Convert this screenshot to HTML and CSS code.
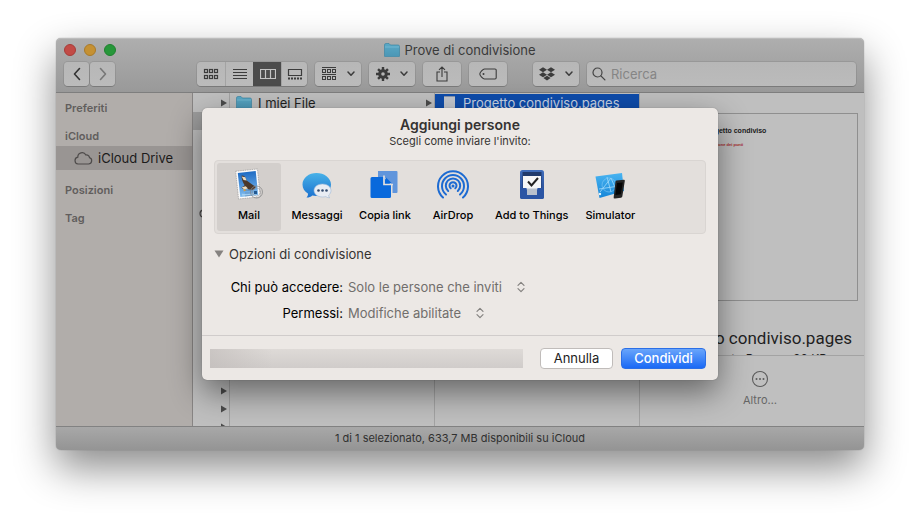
FILE: index.html
```html
<!DOCTYPE html>
<html lang="it">
<head>
<meta charset="utf-8">
<meta name="viewport" content="width=device-width, initial-scale=1">
<title>Prove di condivisione</title>
<link rel="stylesheet" href="styles.css">
</head>
<body>
<svg class="defs" aria-hidden="true">
  <defs>
    <linearGradient id="folder-fill" x1="0" y1="0" x2="0" y2="1"><stop offset="0" stop-color="#5aa9c6"/><stop offset="1" stop-color="#4b96b5"/></linearGradient>
    <symbol id="folder" viewBox="0 0 16 14">
      <path d="M.5 2A1.500 1.500 0 0 1 2 .5h3L6.500 2H14a1.500 1.500 0 0 1 1.500 1.500V13a.8.8 0 0 1-.8.8H1.300a.8.8 0 0 1-.8-.8z" fill="url(#folder-fill)" stroke="#3d86a5" stroke-width=".7"/>
      <path d="M1 4h14" stroke="#78bdd5" stroke-width=".8"/>
    </symbol>
    <symbol id="caret" viewBox="0 0 8 6"><path d="M1 1l3 3.200L7 1" fill="none" stroke="#3c3c3c" stroke-width="1.500" stroke-linecap="round" stroke-linejoin="round"/></symbol>
    <symbol id="arrow" viewBox="0 0 6 8"><path d="M0 .5v7L6 4z" fill="#4b4b4b"/></symbol>
    <symbol id="updown" viewBox="0 0 8 12"><path d="M1 4.300L4 1.300l3 3M1 7.700l3 3 3-3" fill="none" stroke="#858280" stroke-width="1.200" stroke-linecap="round" stroke-linejoin="round"/></symbol>
    <symbol id="cloud" viewBox="0 0 20 14"><path d="M5 13h10.500a3.300 3.300 0 0 0 1-6.400A3 3 0 0 0 12.900 4 4.300 4.300 0 0 0 4.800 6.200 3.450 3.450 0 0 0 5 13z" fill="none" stroke="#4e4b4a" stroke-width="1.200"/></symbol>
  </defs>
</svg>

<main class="window">
  <header class="chrome">
    <div class="titlebar">
      <div class="lights">
        <button class="light light-close" aria-label="Chiudi"></button>
        <button class="light light-min" aria-label="Riduci"></button>
        <button class="light light-zoom" aria-label="Ingrandisci"></button>
      </div>
      <h1 class="title"><svg class="folder"><use href="#folder"/></svg>Prove di condivisione</h1>
    </div>
    <div class="toolbar">
      <div class="nav">
        <button class="tool nav-button" aria-label="Indietro"><svg width="8" height="14" viewBox="0 0 8 14"><path d="M6.500 1.500L1.500 7l5 5.500" fill="none" stroke="#333" stroke-width="1.600" stroke-linecap="round" stroke-linejoin="round"/></svg></button>
        <button class="tool nav-button" aria-label="Avanti"><svg width="8" height="14" viewBox="0 0 8 14"><path d="M1.500 1.500l5 5.500-5 5.500" fill="none" stroke="#777" stroke-width="1.600" stroke-linecap="round" stroke-linejoin="round"/></svg></button>
      </div>
      <div class="tool views">
        <button class="view" aria-label="Icone"><svg width="16" height="12" viewBox="0 0 16 12"><g fill="none" stroke="#3c3c3c" stroke-width="1.200"><rect x="1.500" y="1.500" width="3" height="3"/><rect x="6.500" y="1.500" width="3" height="3"/><rect x="11.500" y="1.500" width="3" height="3"/><rect x="1.500" y="7.500" width="3" height="3"/><rect x="6.500" y="7.500" width="3" height="3"/><rect x="11.500" y="7.500" width="3" height="3"/></g></svg></button>
        <button class="view" aria-label="Elenco"><svg width="14" height="12" viewBox="0 0 14 12"><path d="M0 1.500h14M0 4.500h14M0 7.500h14M0 10.500h14" stroke="#3c3c3c"/></svg></button>
        <button class="view view-on" aria-label="Colonne"><svg width="16" height="12" viewBox="0 0 16 12"><path d="M.5 1.500h15v9H.5zM5.500 1.500v9M10.500 1.500v9" fill="none" stroke="#c4c4c4" stroke-width="1.200"/></svg></button>
        <button class="view" aria-label="Galleria"><svg width="16" height="12" viewBox="0 0 16 12"><path d="M1.500 1.500h13v6h-13z" fill="none" stroke="#3c3c3c" stroke-width="1.200"/><path d="M1 10.500h14" stroke="#3c3c3c" stroke-width="2" stroke-dasharray="2 1"/></svg></button>
      </div>
      <button class="tool menu-tool" aria-label="Raggruppa"><svg width="16" height="14" viewBox="0 0 16 14"><path d="M1 .5h14M1 7.500h14" stroke="#3c3c3c"/><g fill="none" stroke="#3c3c3c"><rect x="1.500" y="2.500" width="3" height="3"/><rect x="6.500" y="2.500" width="3" height="3"/><rect x="11.500" y="2.500" width="3" height="3"/><rect x="1.500" y="9.500" width="3" height="3"/><rect x="6.500" y="9.500" width="3" height="3"/><rect x="11.500" y="9.500" width="3" height="3"/></g></svg><svg class="caret"><use href="#caret"/></svg></button>
      <button class="tool menu-tool" aria-label="Azioni"><svg width="14" height="14" viewBox="0 0 14 14"><g stroke="#3c3c3c" stroke-width="2.400"><path d="M7 0v14M0 7h14M2.050 2.050l9.900 9.900M11.950 2.050l-9.900 9.900"/></g><circle cx="7" cy="7" r="4.800" fill="#3c3c3c"/><circle cx="7" cy="7" r="1.800" fill="#b5b5b5"/></svg><svg class="caret"><use href="#caret"/></svg></button>
      <button class="tool wide-tool" aria-label="Condividi elemento"><svg width="12" height="16" viewBox="0 0 12 16"><path d="M4 6H1v9h10V6H8M6 11V1M3 3.800L6 1l3 2.800" fill="none" stroke="#3c3c3c" stroke-width="1.100"/></svg></button>
      <button class="tool wide-tool" aria-label="Tag"><svg width="18" height="12" viewBox="0 0 18 12"><path d="M5.500 1H16a1.200 1.200 0 0 1 1.200 1.200v7.600A1.200 1.200 0 0 1 16 11H5.500C4 11 .8 7.500.8 6S4 1 5.500 1z" fill="none" stroke="#3c3c3c" stroke-width="1.100"/><circle cx="4.500" cy="6" r="1" fill="#3c3c3c"/></svg></button>
      <button class="tool menu-tool dropbox" aria-label="Dropbox"><svg width="16" height="14" viewBox="0 0 16 14"><path d="M4 .3l4 2.500-4 2.500L0 2.800zM12 .3l4 2.500-4 2.500-4-2.500zM4 5.300l4 2.500-4 2.500-4-2.500zM12 5.300l4 2.500-4 2.500-4-2.500zM8 8.800l3.600 2.300L8 13.600l-3.600-2.500z" fill="#3c3c3c"/></svg><svg class="caret"><use href="#caret"/></svg></button>
      <label class="tool search"><svg width="14" height="14" viewBox="0 0 14 14"><circle cx="5.500" cy="5.500" r="4.500" fill="none" stroke="#444" stroke-width="1.200"/><path d="M8.900 8.900l4 4" stroke="#444" stroke-width="1.300" stroke-linecap="round"/></svg><input type="search" placeholder="Ricerca" aria-label="Ricerca"></label>
    </div>
  </header>

  <div class="browser">
    <nav class="sidebar">
      <h2>Preferiti</h2>
      <h2>iCloud</h2>
      <a class="place" href="#"><svg class="cloud"><use href="#cloud"/></svg>iCloud Drive</a>
      <h2>Posizioni</h2>
      <h2>Tag</h2>
    </nav>
    <ul class="column">
      <li class="row"><svg class="arrow"><use href="#arrow"/></svg></li>
      <li class="row row-path"></li>
      <li class="row"></li><li class="row"></li><li class="row"></li><li class="row"></li>
      <li class="row row-status"><svg class="cloud"><use href="#cloud"/></svg></li>
      <li class="row"></li><li class="row"></li><li class="row"></li><li class="row"></li><li class="row"></li>
      <li class="row"></li><li class="row"></li><li class="row"></li><li class="row"></li>
      <li class="row"><svg class="arrow"><use href="#arrow"/></svg></li>
      <li class="row"><svg class="arrow"><use href="#arrow"/></svg></li>
      <li class="row"><svg class="arrow"><use href="#arrow"/></svg></li>
    </ul>
    <ul class="column">
      <li class="row"><svg class="folder"><use href="#folder"/></svg><span>I miei File</span><svg class="arrow"><use href="#arrow"/></svg></li>
    </ul>
    <ul class="column">
      <li class="row row-selected"><i class="file"></i><span>Progetto condiviso.pages</span></li>
    </ul>
    <section class="preview">
      <div class="page">
        <p class="page-title">Progetto condiviso</p>
        <p class="page-lead">Descrizione dei punti</p>
        <ul class="page-list"><li>Revisione</li><li>Consegna</li><li>Budget</li><li>Preventivo</li></ul>
      </div>
      <div class="info">
        <h2>Progetto condiviso.pages</h2>
        <p>Documento Pages - 38 KB</p>
      </div>
      <div class="actions">
        <button class="more"><svg width="18" height="18" viewBox="0 0 18 18"><circle cx="9" cy="9" r="7.500" fill="none" stroke="#5b5b5b" stroke-width="1.100"/><g fill="#5b5b5b"><circle cx="5.500" cy="9" r="1"/><circle cx="9" cy="9" r="1"/><circle cx="12.500" cy="9" r="1"/></g></svg>Altro…</button>
      </div>
    </section>
  </div>
  <footer class="status">1 di 1 selezionato, 633,7 MB disponibili su iCloud</footer>

  <form class="sheet" role="dialog" aria-labelledby="sheet-title">
    <div class="sheet-body">
      <h2 class="sheet-title" id="sheet-title">Aggiungi persone</h2>
      <p class="sheet-sub">Scegli come inviare l'invito:</p>
      <div class="services">
        <button type="button" class="service service-on">
          <svg viewBox="0 0 32 32"><defs><linearGradient id="sky" x1="0" y1="0" x2="0" y2="1"><stop offset="0" stop-color="#1f6cc4"/><stop offset="1" stop-color="#7ebcf0"/></linearGradient></defs><g transform="rotate(-6 15 16)"><path d="M4 2h22v28H4z" fill="#fafafa" stroke="#a9a7a5" stroke-width=".8" stroke-dasharray="1.600 .7"/><path d="M6 4h18v24H6z" fill="url(#sky)"/><path d="M9.500 7c2.500 0 4 2 4.500 5.500 2 1.500 4.500 4.500 8.500 7l-2 2.500c-3 .5-5-.5-7-1.500-2.500.5-4 0-5.500-1.500l3.500-2c-1.500-3-2.500-6-2-10z" fill="#4a382b"/><path d="M9.500 8l3.500 1 1 3.500-3-1zM8.500 18.500l4-.5 2 2.500-4 .5z" fill="#e9dcc3"/><path d="M10 20l3 2-3 1z" fill="#d99c3c"/><path d="M8 25l5 1 9-1v2H8z" fill="#a5d0f0"/></g><circle cx="23.500" cy="24" r="6" fill="none" stroke="#8c8b8c" stroke-width=".8"/><circle cx="23.500" cy="24" r="4" fill="none" stroke="#9a9b9e" stroke-width=".6"/><path d="M21 23h3v3h-3z" fill="#25588f"/><path d="M12 22l8 1M12 25l8 0M12 28l8-1" stroke="#607a98" stroke-width=".5"/></svg>
          Mail</button>
        <button type="button" class="service">
          <svg viewBox="0 0 32 32"><defs><linearGradient id="bubble" x1="0" y1="0" x2="0" y2="1"><stop offset="0" stop-color="#48b2e8"/><stop offset="1" stop-color="#1b71cf"/></linearGradient></defs><path d="M15.500 5C23 5 30 9.800 30 16.500S23 28 15.500 28c-1.500 0-3-.2-4.200-.5C9.500 29 7.500 29.700 5.500 29.500c1.300-1.200 1.700-2.700 1.400-4C3.500 23.500 1.500 20.300 1.500 16.500 1.500 9.800 8 5 15.500 5z" fill="url(#bubble)"/><path d="M21.500 16c4.600 0 8.500 2.800 8.500 6.500 0 2-.9 3.500-2.400 4.700 0 1 .4 1.900 1.100 2.600-1.500 0-2.900-.4-3.900-1.200-1 .3-2.200.4-3.300.4-4.700 0-8.500-2.800-8.500-6.500s3.800-6.500 8.500-6.500z" fill="#e9edf4" stroke="#9db9d8" stroke-width=".6"/><g fill="#334b6d"><circle cx="17.500" cy="22.500" r="1.300"/><circle cx="21.500" cy="22.500" r="1.300"/><circle cx="25.500" cy="22.500" r="1.300"/></g></svg>
          Messaggi</button>
        <button type="button" class="service">
          <svg viewBox="0 0 32 32"><path d="M9 3h18.500a1 1 0 0 1 1 1v20a1 1 0 0 1-1 1H9z" fill="#6095dc"/><path d="M2 9.500h13.500l8 8V29.500H2z" fill="#e3e0dd"/><path d="M3 9h11.500L22 16.500v12A1.500 1.500 0 0 1 20.500 30H3a1.500 1.500 0 0 1-1.500-1.500v-18A1.500 1.500 0 0 1 3 9z" fill="#0969dc"/><path d="M15 7.500v9h9" fill="none" stroke="#e3e0dd" stroke-width="1.700"/><path d="M17 9.500l5.500 5.500H17z" fill="#0969dc"/></svg>
          Copia link</button>
        <button type="button" class="service">
          <svg viewBox="0 0 32 32"><g fill="none" stroke="#1d6bd2" stroke-width="2" stroke-linecap="round"><path d="M6 29.500A15 15 0 1 1 26 29.500"/><path d="M9 26.500A11 11 0 1 1 23 26.500"/><path d="M11.200 23A7.200 7.200 0 1 1 20.800 23"/><path d="M13.700 20.300a3.500 3.500 0 1 1 4.600 0"/></g><circle cx="16" cy="18" r="1.500" fill="#1d6bd2"/></svg>
          AirDrop</button>
        <button type="button" class="service">
          <svg viewBox="0 0 32 32"><defs><linearGradient id="tray" x1="0" y1="0" x2="0" y2="1"><stop offset="0" stop-color="#3f6dbb"/><stop offset="1" stop-color="#21458e"/></linearGradient></defs><rect x="4" y="2" width="24" height="29" rx="2.500" fill="url(#tray)"/><path d="M6.500 4h19v16h-19z" fill="#203a6c"/><path d="M7 8h18v14H7z" fill="#f6f7f8"/><path d="M4 20h6.500l1 4h9l1-4H28v9a2 2 0 0 1-2 2H6a2 2 0 0 1-2-2z" fill="#2b55a4"/><path d="M11 20.500h10V27H11z" fill="#b9c1cd"/><path d="M12 13.500l3.500 4 6.500-7.500" fill="none" stroke="#222" stroke-width="2"/></svg>
          Add to Things</button>
        <button type="button" class="service">
          <svg viewBox="0 0 32 32"><defs><linearGradient id="print" x1="0" y1="0" x2="0" y2="1"><stop offset="0" stop-color="#49b4f1"/><stop offset="1" stop-color="#1686d8"/></linearGradient></defs><path d="M1.500 8.500L28 5l2 18-24.500 7z" fill="url(#print)"/><path d="M6 24L17 10l6 14M13 9l4 15M5 21l20-3" fill="none" stroke="#a5dcfa" stroke-width=".8"/><circle cx="15" cy="17" r="7" fill="none" stroke="#83caf5" stroke-width=".6"/><circle cx="6" cy="26" r="1.200" fill="#e5f5ff"/><path d="M22.500 12.500l7.300-.8a1 1 0 0 1 1 1.200L28.300 28.500a1.500 1.500 0 0 1-1.300 1.200l-6 .8a1.200 1.200 0 0 1-1.300-1.500l1.700-15.300a1.400 1.400 0 0 1 1.100-1.200z" fill="#242424"/><path d="M23 15l5.700-.6-1.900 11.800-5.400.7z" fill="#050505"/></svg>
          Simulator</button>
      </div>
      <details class="options" open>
        <summary><svg width="10" height="8" viewBox="0 0 10 8"><path d="M.5.5h9L5 7.500z" fill="#858280"/></svg>Opzioni di condivisione</summary>
        <div class="fields">
          <label for="access">Chi può accedere:</label>
          <div class="pick"><select id="access"><option>Solo le persone che inviti</option></select><svg><use href="#updown"/></svg></div>
          <label for="rights">Permessi:</label>
          <div class="pick"><select id="rights"><option>Modifiche abilitate</option></select><svg><use href="#updown"/></svg></div>
        </div>
      </details>
    </div>
    <div class="sheet-foot">
      <div class="account"></div>
      <button type="button" class="push">Annulla</button>
      <button type="submit" class="push push-main">Condividi</button>
    </div>
  </form>
</main>
</body>
</html>
```

FILE: styles.css
```css
* { box-sizing: border-box; }

body {
  margin: 0;
  min-height: 100vh;
  padding: 38px 56px 74px;
  display: flex;
  background: #fff;
  color: #1f1f1f;
  font: 13px/18px Inter, "Liberation Sans", sans-serif;
}

h1, h2, p, ul { margin: 0; padding: 0; font-weight: 400; }
ul { list-style: none; }
button, input, select { font: inherit; color: inherit; }
button { margin: 0; padding: 0; border: 0; background: none; }
svg { display: block; flex: none; }

.defs { position: absolute; width: 0; height: 0; }

.window {
  position: relative;
  flex: 1;
  min-width: 0;
  display: flex;
  flex-direction: column;
  border-radius: 5px;
  background: #bfbfbf;
  box-shadow: 0 0 1px rgba(0, 0, 0, .5), 0 18px 40px rgba(0, 0, 0, .46);
}

/* Title bar and toolbar */
.chrome {
  padding: 0 8px 6px;
  border-top: 1px solid #bcbcbc;
  border-bottom: 1px solid #7e7e7e;
  border-radius: 5px 5px 0 0;
  background: linear-gradient(#aeaeae, #999);
}
.titlebar {
  height: 23px;
  padding-bottom: 2px;
  display: grid;
  grid-template-columns: 1fr auto 1fr;
  align-items: center;
}
.lights { display: flex; gap: 8px; }
.light {
  width: 12px;
  height: 12px;
  border: 1px solid;
  border-radius: 50%;
}
.light-close { background: #c24b46; border-color: #a63c38; }
.light-min { background: #c59133; border-color: #a97a29; }
.light-zoom { background: #27973a; border-color: #1f812f; }
.title {
  display: flex;
  align-items: center;
  gap: 4px;
  font-size: 13px;
  color: #3a3a3a;
}
.folder { width: 16px; height: 14px; }

.toolbar { display: flex; gap: 8px; }
.tool {
  height: 24px;
  border-radius: 4px;
  background: linear-gradient(#b7b7b7, #bbb);
  box-shadow: 0 0 0 1px rgba(0, 0, 0, .08), 0 1px 0 #858585;
}
.nav { display: flex; gap: 1px; margin-right: 74px; }
.nav-button { width: 25px; }
.tool, .view { display: flex; align-items: center; justify-content: center; }
.views { overflow: hidden; }
.view { width: 28px; height: 24px; border-left: 1px solid #a3a3a3; }
.view:first-child { border-left: 0; }
.view:last-child { width: 26px; }
.view-on { background: #4c4c4c; border-color: #4c4c4c; }
.menu-tool { width: 46px; gap: 10px; }
.caret { width: 8px; height: 6px; }
.wide-tool { width: 38px; }
.dropbox { margin-left: 18px; }
.search { flex: 1; min-width: 0; padding: 0 5px; gap: 5px; }
.search input {
  flex: 1;
  min-width: 0;
  padding: 0;
  border: 0;
  outline: 0;
  background: none;
}
.search input::placeholder { color: #858585; }

/* Columns */
.browser {
  flex: 1 0 333px;
  height: 333px;
  display: grid;
  grid-template-columns: 137px 37px 1fr 1fr 224px;
  overflow: hidden;
}
.sidebar {
  border-right: 1px solid #888584;
  background: #b1adaa;
  padding-top: 6px;
}
.sidebar h2 {
  margin-bottom: 10px;
  padding-left: 9px;
  font-size: 11px;
  font-weight: 600;
  color: #615e5d;
}
.sidebar h2:nth-of-type(2) { margin-bottom: 1px; }
.place {
  height: 24px;
  margin-bottom: 11px;
  padding-left: 17px;
  display: flex;
  align-items: center;
  gap: 5px;
  background: #999593;
  color: #1c1b1b;
  text-decoration: none;
}
.cloud { width: 20px; height: 14px; }
.column {
  height: 333px;
  padding-top: 1px;
  border-right: 1px solid #a3a3a3;
  overflow: hidden;
}
.row {
  height: 18px;
  display: flex;
  align-items: center;
  gap: 6px;
  padding: 0 2px 0 6px;
  white-space: nowrap;
}
.row .arrow { width: 6px; height: 8px; margin-left: auto; }
.row-path { background: #9d9d9d; }
.row-status { padding-left: 5px; }
.row-selected { background: #0e4cab; color: #c8d3e4; padding-left: 9px; gap: 8px; }
.file { width: 11px; height: 14px; background: #c3c7ce; border-top: 1px solid #8794aa; }

.preview {
  height: 333px;
  display: flex;
  flex-direction: column;
  text-align: center;
}
.page {
  height: 188px;
  margin: 20px 6px 0 7px;
  padding: 12px 30px 0 55px;
  border: 1px solid #8f8f8f;
  color: #202020;
  text-align: left;
  font-family: "Liberation Sans", sans-serif;
}
.page-title { font-size: 7px; line-height: 10px; font-weight: 700; }
.page-lead { margin-top: 5px; font-size: 4px; line-height: 8px; font-weight: 700; color: #a52a2a; }
.page-list { margin-top: 4px; font-size: 3px; line-height: 3px; }
.info { flex: 1; min-height: 0; overflow: hidden; padding-top: 25px; }
.info h2 {
  padding-right: 12px;
  font: 17px/24px Roboto, "Liberation Sans", sans-serif;
  text-align: right;
  white-space: nowrap;
}
.info p { font-size: 12px; line-height: 18px; }
.actions {
  height: 71px;
  padding: 14px 0 0 16px;
  border-top: 1px solid #a3a3a3;
}
.more {
  display: inline-flex;
  flex-direction: column;
  align-items: center;
  gap: 3px;
  font-size: 11px;
  color: #666;
}

.status {
  height: 24px;
  border-top: 1px solid #828282;
  border-radius: 0 0 5px 5px;
  background: linear-gradient(#a8a8a8, #949494);
  color: #303030;
  font-size: 11px;
  line-height: 23px;
  text-align: center;
}

/* Sharing sheet */
.sheet {
  position: absolute;
  top: 70px;
  left: 146px;
  right: 146px;
  border-radius: 5px;
  background: #ece8e5;
  box-shadow: 0 0 1px rgba(0, 0, 0, .4), 0 12px 32px rgba(0, 0, 0, .48);
}
.sheet-body { padding: 8px 12px 9px; }
.sheet-title {
  font-size: 14px;
  font-weight: 600;
  text-align: center;
  color: #353332;
}
.sheet-sub {
  font-size: 11px;
  line-height: 14px;
  text-align: center;
  color: #353332;
}
.services {
  margin-top: 12px;
  height: 74px;
  padding: 2px;
  display: flex;
  gap: 4px;
  border: 1px solid #d9d5d2;
  border-radius: 4px;
  background: #e3dfdc;
}
.service {
  min-width: 64px;
  padding: 5px 6px;
  display: flex;
  flex-direction: column;
  align-items: center;
  gap: 5px;
  border-radius: 3px;
  color: #000;
  font-size: 11px;
  font-weight: 500;
  line-height: 20px;
  white-space: nowrap;
}
.service svg { width: 32px; height: 32px; }
.service-on { background: #d3cfcc; }
.options summary {
  margin-top: 11px;
  display: flex;
  align-items: center;
  gap: 5px;
  list-style: none;
  color: #353332;
}
.fields {
  margin-top: 11px;
  display: grid;
  grid-template-columns: 129px 1fr;
  column-gap: 5px;
  line-height: 26px;
}
.fields label { text-align: right; color: #000; white-space: nowrap; }
.pick { display: flex; align-items: center; gap: 15px; color: #716e6c; }
.pick select {
  height: 20px;
  padding: 0;
  border: 0;
  background: none;
  line-height: 20px;
  appearance: none;
}
.pick svg { width: 8px; height: 12px; }
.sheet-foot {
  display: flex;
  align-items: center;
  gap: 8px;
  padding: 12px 12px 11px 8px;
  border-top: 1px solid #d0cccb;
}
.account {
  flex: 1;
  height: 19px;
  margin-right: 9px;
  background: linear-gradient(90deg, rgba(190, 185, 183, .6), rgba(216, 212, 209, 0) 20%), linear-gradient(#dedad7, #d0ccca);
}
.push {
  width: 73px;
  height: 21px;
  border: 1px solid #c0bcba;
  border-radius: 4px;
  background: #fff;
  color: #1c1c1c;
  line-height: 19px;
}
.push-main {
  width: 85px;
  border-color: #2c6fe6;
  background: linear-gradient(#69a5fb, #1a69f5);
  color: #fff;
  font-weight: 500;
}
```
